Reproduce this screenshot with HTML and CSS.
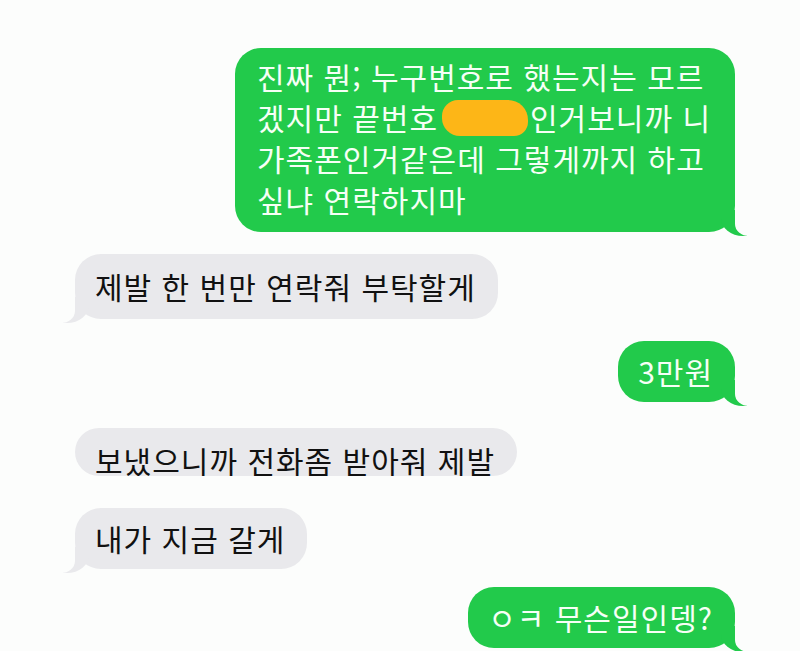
FILE: index.html
```html
<!DOCTYPE html>
<html lang="ko">
<head>
  <meta charset="UTF-8" />
  <meta name="viewport" content="width=device-width, initial-scale=1.0"/>
  <title>문자</title>
  <link rel="stylesheet" href="styles.css">
</head>
<body>
  <div class="thread">
    <div class="row row-out first">
      <div class="bubble out multi">진짜 뭔; 누구번호로 했는지는 모르<br>겠지만 끝번호<span class="redact"></span>인거보니까 니<br>가족폰인거같은데 그렇게까지 하고<br>싶냐 연락하지마</div>
    </div>
    <div class="row row-in">
      <div class="bubble in tall">제발 한 번만 연락줘 부탁할게</div>
    </div>
    <div class="row row-out">
      <div class="bubble out">3만원</div>
    </div>
    <div class="row row-in cut">
      <div class="bubble in tall no-tail">보냈으니까 전화좀 받아줘 제발</div>
    </div>
    <div class="row row-in after-cut">
      <div class="bubble in">내가 지금 갈게</div>
    </div>
    <div class="row row-out last">
      <div class="bubble out">ㅇㅋ 무슨일인뎅?</div>
    </div>
  </div>
</body>
</html>
```

FILE: styles.css
```css
html, body {
  margin: 0;
  padding: 0;
  height: 100%;
  overflow: hidden;
}

body {
  font-family: "Noto Sans CJK KR", "Noto Sans", sans-serif;
  background-color: #fcfdfc;
}

.thread {
  display: flex;
  flex-direction: column;
  padding: 48px 65px 0 75px;
}

.row {
  display: flex;
  margin-top: 22px;
}

.row.first {
  margin-top: 0;
}

.row-out {
  justify-content: flex-end;
}

.row-in {
  justify-content: flex-start;
}

.row.cut {
  margin-top: 26px;
  height: 48px;
  overflow: hidden;
}

.row.after-cut {
  margin-top: 32px;
}

.row.last {
  margin-top: 18px;
}

.bubble {
  position: relative;
  font-size: 30px;
  letter-spacing: 1px;
  line-height: 41px;
  padding: 10px 22px 10px 20px;
  border-radius: 26px;
  white-space: nowrap;
}

.bubble.tall {
  padding-top: 12px;
  padding-bottom: 12px;
}

.bubble.multi {
  padding: 8px 24px 12px 22px;
}

.out {
  background-color: #22ca4b;
  color: #f6fff6;
}

.in {
  background-color: #e9e9ec;
  color: #111;
}

/* tails */
.out::before,
.in::before {
  content: "";
  position: absolute;
  bottom: -4px;
  width: 26px;
  height: 26px;
}

.out::after,
.in::after {
  content: "";
  position: absolute;
  bottom: -4px;
  width: 32px;
  height: 30px;
  background-color: #fcfdfc;
}

.out::before {
  right: -12px;
  background-color: #22ca4b;
  border-bottom-left-radius: 22px 18px;
}

.out::after {
  right: -32px;
  border-bottom-left-radius: 14px 12px;
}

.in::before {
  left: -12px;
  background-color: #e9e9ec;
  border-bottom-right-radius: 22px 18px;
}

.in::after {
  left: -32px;
  border-bottom-right-radius: 14px 12px;
}

.no-tail::before,
.no-tail::after {
  display: none;
}

.redact {
  display: inline-block;
  width: 86px;
  height: 36px;
  margin: 0 2px 0 4px;
  vertical-align: -6px;
  background-color: #fdb617;
  border-radius: 16px 20px 14px 18px;
}
```
